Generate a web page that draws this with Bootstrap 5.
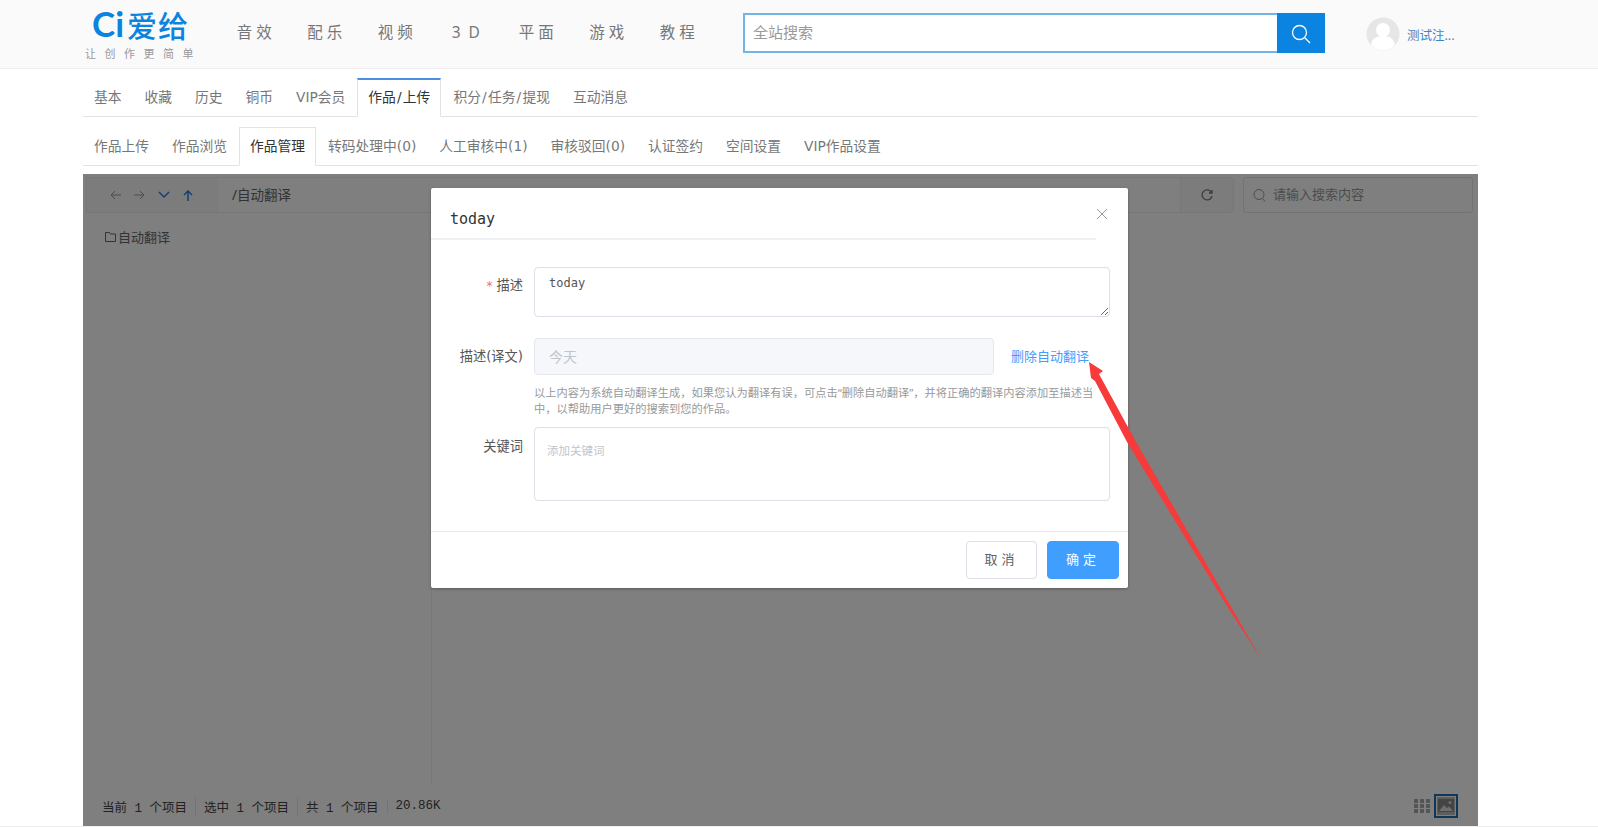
<!DOCTYPE html>
<html lang="zh-CN">

<head>
    <meta charset="UTF-8">
    <meta name="viewport" content="width=device-width, initial-scale=1.0">
    <title>作品管理</title>
    <link href="https://cdn.jsdelivr.net/npm/bootstrap@5.3.1/dist/css/bootstrap.min.css" rel="stylesheet">
    <script src="https://cdn.jsdelivr.net/npm/bootstrap@5.3.1/dist/js/bootstrap.bundle.min.js"></script>
    <style>
        html, body { height: 827px; overflow: hidden; }
        body { font-family: "Noto Sans", "Noto Sans CJK SC", sans-serif; font-size: 14px; color: #666; background: #fff; }

        /* top bar */
        .top-bar { height: 69px; background: #fafafa; border-bottom: 1px solid #eee; padding-left: 85px; }
        .logo-box { width: 136px; height: 68px; }
        .logo-name { height: 40px; padding: 8px 0 0 7px; color: #0a84e0; line-height: 30px; white-space: nowrap; }
        .logo-ci { font: 700 35px/30px "Lato", sans-serif; margin-right: 3px; }
        .logo-cn { font: 500 30px/30px "Noto Sans CJK SC", sans-serif; letter-spacing: 1px; }
        .logo-sub { font-size: 11px; line-height: 14px; letter-spacing: 8.5px; color: #999; margin-top: 7px; white-space: nowrap; }
        .top-menu a { display: block; width: 70.5px; margin-top: -2px; text-align: center; font-size: 15.5px; letter-spacing: 4px; word-spacing: -4px; color: #777; text-decoration: none; white-space: nowrap; }
        .search-box { width: 582px; height: 40px; margin-top: -3px; margin-left: 28.5px; border: 2px solid #6fb5e8; border-right: 0; background: #fff; }
        .search-box .form-control { border: 0; border-radius: 0; background: transparent; box-shadow: none; font-size: 15px; padding: 0 8px; color: #999; }
        .search-box .form-control::placeholder { color: #999; }
        .search-btn { width: 48px; height: 40px; margin-top: -2px; margin-bottom: -2px; background: #0a84e0; border: 0; border-radius: 0; padding: 0; }
        .user-box { margin-left: 41px; }
        .user-name { font-size: 12.5px; color: #3d85c6; margin-left: 7px; margin-top: 4px; }

        /* tabs */
        .page-wrap { width: 1395px; margin-left: 83px; }
        .tabs-first { margin-top: 9px; }
        .tabs-second { margin-top: 10px; margin-bottom: 8px; }
        .page-wrap .nav-tabs { --bs-nav-tabs-border-color: #e3e3e3; --bs-nav-tabs-border-radius: 0; gap: 1px; height: 39px; }
        .page-wrap .nav-link { height: 39px; padding: 0 10px; font-family: "DejaVu Sans", "Noto Sans CJK SC", sans-serif; font-size: 13.75px; line-height: 36px; color: #777; white-space: nowrap; }
        .page-wrap .nav-link.active { color: #333; border-color: #e3e3e3 #e3e3e3 #fff; }
        .tabs-first .nav-link.active { border-top: 2px solid #4a90e2; line-height: 34px; }
        .tab-slash { margin: 0 1.2px; }

        /* file manager panel under the mask */
        .file-panel { height: 652px; background: #fff; }
        .file-toolbar { padding: 3px 5px 0 3px; height: 39px; }
        .toolbar-left { width: 132px; height: 36px; padding-left: 23px; gap: 13px; background: #f9f9f9; border: 1px solid #eee; border-right: 0; }
        .toolbar-path { flex: 1; height: 36px; padding-left: 14px; border: 1px solid #eee; border-left: 0; border-right: 0; font-size: 13.5px; color: #666; }
        .toolbar-refresh { width: 54px; height: 36px; background: #f9f9f9; border: 1px solid #eee; border-radius: 0 4px 4px 0; }
        .toolbar-search { width: 230px; height: 36px; margin-left: 9px; padding-left: 9px; gap: 7px; border: 1px solid #e4e4e4; border-radius: 3px; font-size: 13px; color: #999; }
        .file-main { height: 570px; }
        .file-tree { width: 349px; padding: 15px 0 0 22px; border-right: 1px solid #eee; font-size: 13px; color: #666; gap: 2px; height: 570px; }
        .file-status { height: 43px; padding: 3px 0 0 19px; font: 12.5px "Liberation Mono", "Noto Sans CJK SC", monospace; color: #444; }
        .file-status span + span { border-left: 1px solid #e6e6e6; margin-left: 8px; padding-left: 8px; }
        .view-grid { width: 16px; height: 14px; margin-right: 4px; }
        .view-big { width: 24px; height: 24px; border: 2px solid #1d6fb5; margin-right: 20px; }
        .page-strip { height: 2px; background: #eee; }

        /* dialog */
        .panel-mask { inset: 0; background: rgba(0, 0, 0, .5); }
        .edit-dialog { width: 697px; height: 400px; left: 348px; top: 14px; background: #fff; border: 0; border-radius: 2px; font-size: 13px; box-shadow: 0 1px 3px rgba(0, 0, 0, .3); }
        .edit-dialog .modal-header { height: 52px; margin-right: 32px; padding: 11px 0 0 19px; border-bottom: 2px solid #eef0f4; border-radius: 0; }
        .dialog-title { font: 15px "DejaVu Sans Mono", monospace; color: #333; }
        .dialog-close { top: 21px; right: 21px; }
        .edit-dialog .modal-body { height: 291px; padding: 27px 18px 0 0; flex: none; }
        .field-label { width: 92px; margin-right: 11px; flex: none; text-align: right; color: #555; font-family: "DejaVu Sans", "Noto Sans CJK SC", sans-serif; font-size: 13.25px; }
        .label-first { margin-top: 9px; }
        .field-star { color: #f56c6c; font-size: 12px; margin-right: 4px; }
        .field-area { height: 50px; padding: 8px 14px; border: 1px solid #dcdfe6; border-radius: 4px; font: 12px "DejaVu Sans Mono", monospace; color: #555; }
        .field-keywords { height: 74px; padding: 14px 12px; border: 1px solid #dcdfe6; border-radius: 4px; font-size: 11.5px; resize: none; }
        .field-keywords::placeholder { color: #c0c4cc; }
        .field-translated { margin-top: 21px; }
        .field-input { width: 460px; height: 37px; padding: 0 14px; border: 1px solid #e4e7ed; border-radius: 4px; font-size: 14px; }
        .field-input:disabled { background: #f5f7fa; }
        .field-input::placeholder { color: #c0c4cc; }
        .delete-link { margin-left: 17px; color: #409eff; font-size: 13px; text-decoration: none; white-space: nowrap; }
        .field-help { width: 578px; margin: 10px 0 10px 103px; font-size: 11.25px; line-height: 16px; color: #999; }
        .keyword-label { margin-top: 10px; }
        .edit-dialog .modal-footer { height: 57px; padding: 0 9px 1px 0; gap: 10px; border-top: 1px solid #e6e8ec; flex-wrap: nowrap; align-items: center; }
        .edit-dialog .modal-footer .btn { margin: 0; height: 38px; padding: 0; border-radius: 4px; font-size: 13px; letter-spacing: 4px; }
        .btn-cancel { width: 71px; background: #fff; border-color: #dcdfe6; color: #606266; }
        .btn-confirm { width: 72px; background: #409eff; border-color: #409eff; color: #fff; }
        .red-arrow { left: 997px; top: 181px; width: 190px; height: 310px; pointer-events: none; }
    </style>
</head>

<body>
    <header class="top-bar d-flex align-items-center">
        <div class="logo-box flex-shrink-0">
            <div class="logo-name"><span class="logo-ci">Ci</span><span class="logo-cn">爱给</span></div>
            <div class="logo-sub">让创作更简单</div>
        </div>
        <nav class="top-menu d-flex">
            <a href="#">音效</a>
            <a href="#">配乐</a>
            <a href="#">视频</a>
            <a href="#">3 D</a>
            <a href="#">平面</a>
            <a href="#">游戏</a>
            <a href="#">教程</a>
        </nav>
        <div class="search-box d-flex align-items-center flex-shrink-0">
            <input class="form-control" type="text" placeholder="全站搜索">
            <button class="btn search-btn flex-shrink-0" type="button" aria-label="搜索">
                <svg width="22" height="22" viewBox="0 0 22 22" fill="none" stroke="#fff" stroke-width="1.3"><circle cx="9.5" cy="9.5" r="7"/><path d="M14.5 14.5 20 20"/></svg>
            </button>
        </div>
        <div class="user-box d-flex align-items-center">
            <svg width="34" height="34" viewBox="0 0 34 34"><circle cx="17" cy="17" r="16.5" fill="#e6e6e6"/><circle cx="17" cy="13" r="7" fill="#fff"/><path d="M5 28c1-7 6-9 12-9s11 2 12 9a16 16 0 0 1-24 0z" fill="#fff"/></svg>
            <a class="user-name text-decoration-none" href="#">测试注...</a>
        </div>
    </header>

    <div class="page-wrap">
        <ul class="nav nav-tabs tabs-first">
            <li class="nav-item"><a class="nav-link" href="#">基本</a></li>
            <li class="nav-item"><a class="nav-link" href="#">收藏</a></li>
            <li class="nav-item"><a class="nav-link" href="#">历史</a></li>
            <li class="nav-item"><a class="nav-link" href="#">铜币</a></li>
            <li class="nav-item"><a class="nav-link" href="#">VIP会员</a></li>
            <li class="nav-item"><a class="nav-link active" href="#">作品<span class="tab-slash">/</span>上传</a></li>
            <li class="nav-item"><a class="nav-link" href="#">积分<span class="tab-slash">/</span>任务<span class="tab-slash">/</span>提现</a></li>
            <li class="nav-item"><a class="nav-link" href="#">互动消息</a></li>
        </ul>
        <ul class="nav nav-tabs tabs-second">
            <li class="nav-item"><a class="nav-link" href="#">作品上传</a></li>
            <li class="nav-item"><a class="nav-link" href="#">作品浏览</a></li>
            <li class="nav-item"><a class="nav-link active" href="#">作品管理</a></li>
            <li class="nav-item"><a class="nav-link" href="#">转码处理中(0)</a></li>
            <li class="nav-item"><a class="nav-link" href="#">人工审核中(1)</a></li>
            <li class="nav-item"><a class="nav-link" href="#">审核驳回(0)</a></li>
            <li class="nav-item"><a class="nav-link" href="#">认证签约</a></li>
            <li class="nav-item"><a class="nav-link" href="#">空间设置</a></li>
            <li class="nav-item"><a class="nav-link" href="#">VIP作品设置</a></li>
        </ul>

        <section class="file-panel position-relative">
            <div class="file-toolbar d-flex">
                <div class="toolbar-left d-flex align-items-center flex-shrink-0">
                    <svg width="11" height="10" viewBox="0 0 11 10" fill="none" stroke="#999"><path d="M11 5H1M5 1 1 5l4 4"/></svg>
                    <svg width="11" height="10" viewBox="0 0 11 10" fill="none" stroke="#999"><path d="M0 5h10M6 1l4 4-4 4"/></svg>
                    <svg width="12" height="8" viewBox="0 0 12 8" fill="none" stroke="#2f7fe0" stroke-width="1.5"><path d="m1 1 5 5 5-5"/></svg>
                    <svg width="10" height="11" viewBox="0 0 10 11" fill="none" stroke="#2f7fe0" stroke-width="1.5"><path d="M5 11V1M1 5l4-4 4 4"/></svg>
                </div>
                <div class="toolbar-path d-flex align-items-center">/自动翻译</div>
                <div class="toolbar-refresh d-flex align-items-center justify-content-center flex-shrink-0">
                    <svg width="12" height="12" viewBox="0 0 12 12" fill="none" stroke="#777" stroke-width="1.3"><path d="M10.5 3.5A5 5 0 1 0 11 7M11 1v3H8"/></svg>
                </div>
                <div class="toolbar-search d-flex align-items-center flex-shrink-0">
                    <svg width="13" height="14" viewBox="0 0 13 14" fill="none" stroke="#999"><circle cx="6" cy="6.500" r="5"/><path d="m9.500 10.500 2.500 3"/></svg>
                    请输入搜索内容
                </div>
            </div>
            <div class="file-main d-flex">
                <div class="file-tree d-flex align-items-start">
                    <svg class="mt-1" width="11" height="10" viewBox="0 0 11 10" fill="none" stroke="#666"><path d="M.5 9.500v-9h4l1 1.500h5v7.500z"/></svg>
                    <span>自动翻译</span>
                </div>
            </div>
            <div class="file-status d-flex align-items-center">
                <span>当前 1 个项目</span><span>选中 1 个项目</span><span>共 1 个项目</span><span>20.86K</span>
                <div class="ms-auto d-flex align-items-center">
                    <svg class="view-grid" viewBox="0 0 16 14" fill="#aaa"><path d="M0 0h4v4H0zM6 0h4v4H6zM12 0h4v4h-4zM0 5h4v4H0zM6 5h4v4H6zM12 5h4v4h-4zM0 10h4v4H0zM6 10h4v4H6zM12 10h4v4h-4z"/></svg>
                    <svg class="view-big" viewBox="0 0 20 20"><rect x="1" y="1" width="18" height="18" fill="#bbb"/><rect x="2" y="3" width="16" height="13" fill="#888"/><circle cx="14" cy="6.500" r="1.500" fill="#ddd"/><path d="m3 15 5-6 3 3 2-1.500 4 4.500z" fill="#ddd"/></svg>
                </div>
            </div>

            <div class="panel-mask position-absolute"></div>

            <div class="modal-content edit-dialog position-absolute">
                <div class="modal-header">
                    <div class="dialog-title">today</div>
                </div>
                <svg class="dialog-close position-absolute" width="10" height="10" viewBox="0 0 10 10" stroke="#999"><path d="m0 0 10 10M10 0 0 10"/></svg>
                <div class="modal-body">
                    <div class="d-flex align-items-start">
                        <label class="field-label label-first"><span class="field-star">*</span>描述</label>
                        <textarea class="form-control field-area flex-grow-1 shadow-none">today</textarea>
                    </div>
                    <div class="d-flex align-items-center field-translated">
                        <label class="field-label">描述(译文)</label>
                        <input class="form-control field-input shadow-none" type="text" placeholder="今天" disabled>
                        <a class="delete-link" href="#">删除自动翻译</a>
                    </div>
                    <p class="field-help">以上内容为系统自动翻译生成，如果您认为翻译有误，可点击“删除自动翻译”，并将正确的翻译内容添加至描述当中，以帮助用户更好的搜索到您的作品。</p>
                    <div class="d-flex align-items-start">
                        <label class="field-label keyword-label">关键词</label>
                        <textarea class="form-control field-keywords flex-grow-1 shadow-none" placeholder="添加关键词"></textarea>
                    </div>
                </div>
                <div class="modal-footer">
                    <button class="btn btn-cancel" type="button">取消</button>
                    <button class="btn btn-confirm" type="button">确定</button>
                </div>
            </div>

            <svg class="red-arrow position-absolute" viewBox="1080 355 190 310"><polygon points="1089,362 1103,371 1099,374 1135,440 1230,605 1261,659 1227,606 1127,442 1095,381 1091,378" fill="#f73a3a"/></svg>
        </section>
    </div>
    <div class="page-strip"></div>
</body>
</html>
